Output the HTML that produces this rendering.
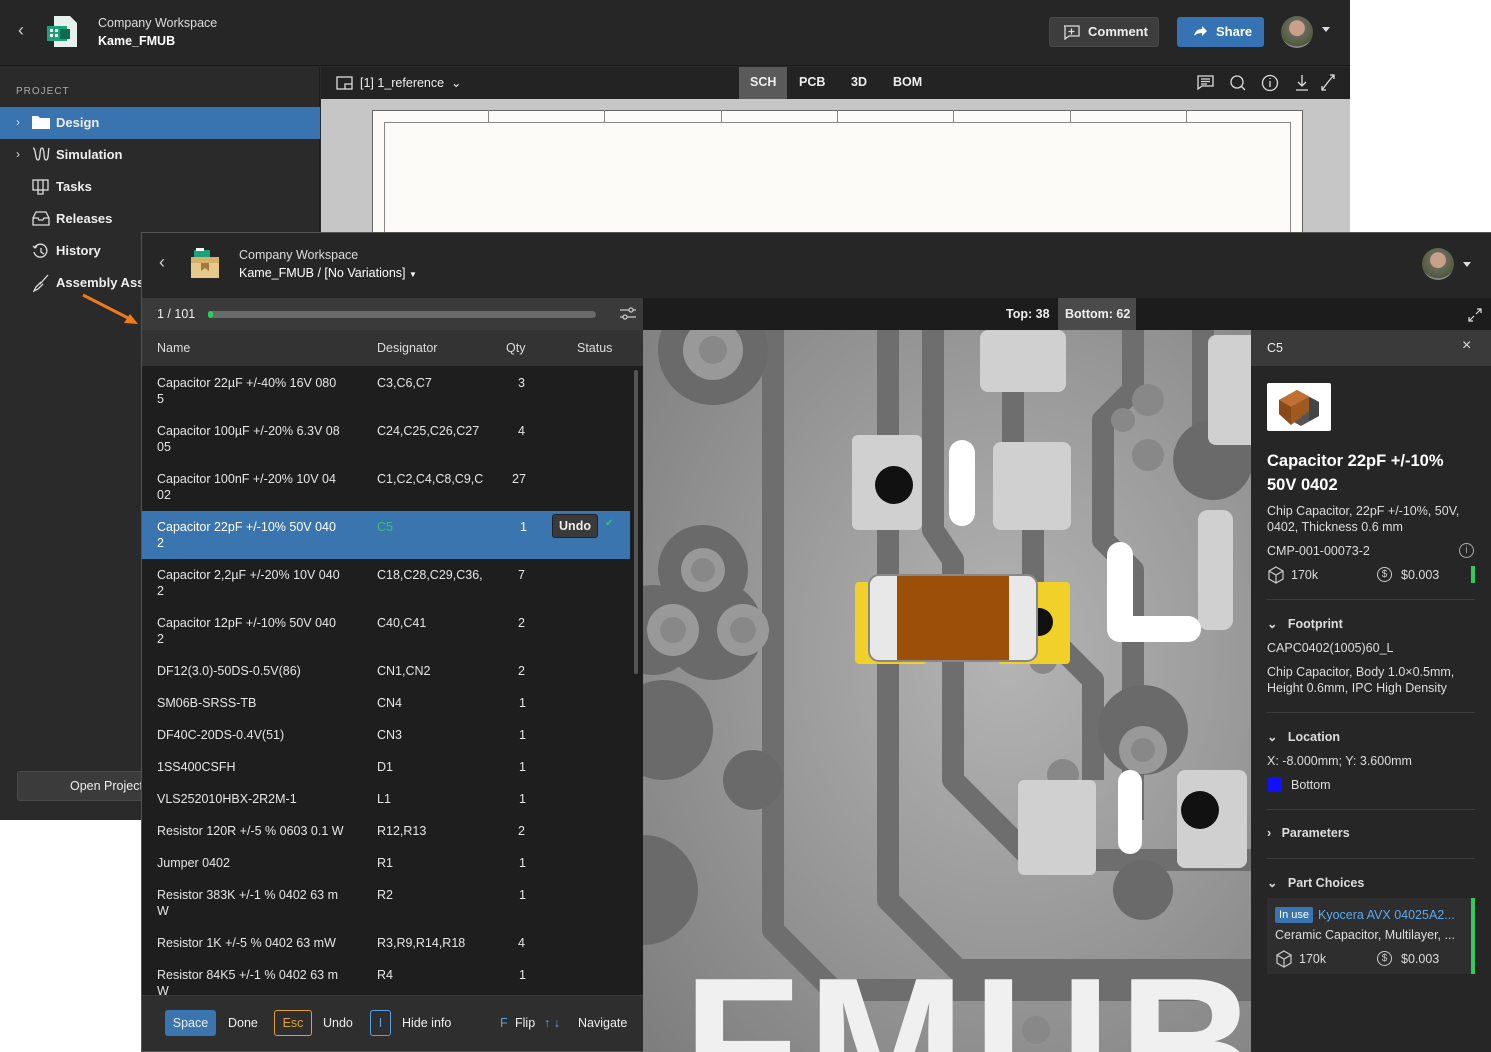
<!DOCTYPE html>
<html><head><meta charset="utf-8"><style>
*{box-sizing:border-box;margin:0;padding:0}
html,body{width:1491px;height:1052px;overflow:hidden}
body{background:#fff;font-family:"Liberation Sans",sans-serif;position:relative;color:#e8e8e8;font-size:13px}
.abs{position:absolute}
.side div.item{position:absolute;left:0;width:320px;height:32px;line-height:32px;font-size:13px;font-weight:bold;color:#eee;padding-left:56px}
.row{position:absolute;left:141px;width:490px;font-size:12.5px;color:#e6e6e6;line-height:16px}
.row span{position:absolute;white-space:nowrap}
.row span.d{width:106px;overflow:hidden}
.k{position:absolute;top:1010px;height:26px;line-height:26px;font-size:12.5px;color:#eee}
.ip{position:absolute;left:1267px;font-size:12.5px;color:#ddd;line-height:16px}
.sec{position:absolute;left:1267px;font-size:12.5px;font-weight:bold;color:#ddd}
.hr{position:absolute;left:1267px;width:208px;height:1px;background:#3c3c3c}
</style></head><body>

<div class="abs" style="left:0;top:0;width:1350px;height:820px;background:#2a2a2a"></div>
<div class="abs" style="left:0;top:0;width:1350px;height:66px;background:#262626;border-bottom:1px solid #1a1a1a"></div>
<div class="abs" style="left:18px;top:20px;font-size:18px;color:#ccc">‹</div>
<svg class="abs" style="left:46px;top:15px" width="36" height="34"><path d="M8 1h16l7 7v24H8z" fill="#e8f0ee"/><rect x="1" y="11" width="20" height="15" fill="#1aa37a"/><rect x="14" y="14" width="10" height="10" fill="#0d6b4f"/><rect x="4" y="14" width="3" height="3" fill="#fff"/><rect x="4" y="19" width="3" height="3" fill="#fff"/><rect x="9" y="14" width="3" height="3" fill="#fff"/><rect x="9" y="19" width="3" height="3" fill="#fff"/></svg>
<div class="abs" style="left:98px;top:16px;font-size:12.5px;color:#ddd">Company Workspace</div>
<div class="abs" style="left:98px;top:34px;font-size:12.5px;font-weight:bold;color:#fff">Kame_FMUB</div>
<div class="abs" style="left:1049px;top:17px;width:110px;height:30px;background:#3d3d3d;border-radius:3px;border:1px solid #4a4a4a;font-weight:bold;font-size:13px;line-height:28px;padding-left:38px;color:#eee">Comment</div>
<svg class="abs" style="left:1063px;top:25px" width="18" height="15"><path d="M1 1h15v10H6l-4 3V1z" fill="none" stroke="#ddd" stroke-width="1.3"/><path d="M8.5 3.5v6M5.5 6.5h6" stroke="#ddd" stroke-width="1.3"/></svg>
<div class="abs" style="left:1177px;top:17px;width:87px;height:30px;background:#3573b5;border-radius:3px;font-weight:bold;font-size:13px;line-height:30px;padding-left:39px;color:#fff">Share</div>
<svg class="abs" style="left:1193px;top:25px" width="14" height="12"><path d="M1 11c1-5 4-7 8-7V1l5 5-5 5V8c-3 0-6 1-8 3z" fill="#fff"/></svg>
<div class="abs" style="left:1281px;top:16px;width:32px;height:32px;border-radius:50%;background:radial-gradient(circle at 50% 38%,#c9a08a 0 30%,#6a6a5a 32%,#4d5a3c 70%,#8a8a8a 72%)"></div>
<div class="abs" style="left:1322px;top:27px;width:0;height:0;border-left:4px solid transparent;border-right:4px solid transparent;border-top:5px solid #ddd"></div>

<div class="abs" style="left:0;top:67px;width:320px;height:753px;background:#2a2a2a;border-right:1px solid #1c1c1c"></div>
<div class="abs" style="left:16px;top:86px;font-size:10px;letter-spacing:1px;color:#aaa">PROJECT</div>
<div class="side">
<div class="item" style="top:107px;background:#3a74b0">Design</div>
<div class="item" style="top:139px">Simulation</div>
<div class="item" style="top:171px">Tasks</div>
<div class="item" style="top:203px">Releases</div>
<div class="item" style="top:235px">History</div>
<div class="item" style="top:267px">Assembly Assistant</div>
</div>
<div class="abs" style="left:16px;top:115px;color:#ddd;font-size:12px">›</div>
<div class="abs" style="left:16px;top:147px;color:#ddd;font-size:12px">›</div>
<svg class="abs" style="left:31px;top:114px" width="20" height="16"><path d="M1 2h6l2 2h10v11H1z" fill="#fff"/></svg>
<svg class="abs" style="left:32px;top:146px" width="18" height="16" fill="none" stroke="#ddd" stroke-width="1.3"><path d="M1 2c3 0 2 12 5 12s1-12 4-12 1 12 4 12 2-10 3-12"/></svg>
<svg class="abs" style="left:32px;top:179px" width="18" height="16" fill="none" stroke="#ddd" stroke-width="1.3"><rect x="1" y="1" width="15" height="10"/><path d="M6 1v14h5V1"/></svg>
<svg class="abs" style="left:32px;top:211px" width="18" height="16" fill="none" stroke="#ddd" stroke-width="1.3"><path d="M1 7l3-6h10l3 6v7H1z M1 7h5l1 2h4l1-2h5"/></svg>
<svg class="abs" style="left:32px;top:243px" width="18" height="16" fill="none" stroke="#ddd" stroke-width="1.3"><path d="M3 4a6.5 6.5 0 1 1-1 5"/><path d="M1 3l2 2 2-2M9 5v4l3 2"/></svg>
<svg class="abs" style="left:32px;top:274px" width="18" height="18" fill="none" stroke="#ddd" stroke-width="1.3"><path d="M16 1L8 10M9 8l-5 5-2 4 4-2 5-5"/></svg>
<div class="abs" style="left:17px;top:771px;width:130px;height:30px;background:#3b3b3b;border-radius:3px;border:1px solid #4a4a4a;font-size:12.5px;line-height:28px;padding-left:52px;color:#eee">Open Project</div>

<div class="abs" style="left:321px;top:67px;width:1029px;height:32px;background:#232323"></div>
<svg class="abs" style="left:336px;top:76px" width="17" height="14" fill="none" stroke="#ddd" stroke-width="1.3"><rect x="1" y="1" width="15" height="12"/><path d="M9 13V8h7"/></svg>
<div class="abs" style="left:360px;top:75px;font-size:12.5px;color:#eee">[1] 1_reference &nbsp;⌄</div>
<div class="abs" style="left:739px;top:67px;width:48px;height:32px;background:#5a5a5a"></div>
<div class="abs" style="left:750px;top:75px;font-size:12.5px;font-weight:bold;color:#eee">SCH</div>
<div class="abs" style="left:799px;top:75px;font-size:12.5px;font-weight:bold;color:#eee">PCB</div>
<div class="abs" style="left:851px;top:75px;font-size:12.5px;font-weight:bold;color:#eee">3D</div>
<div class="abs" style="left:893px;top:75px;font-size:12.5px;font-weight:bold;color:#eee">BOM</div>
<svg class="abs" style="left:1196px;top:73px" width="150" height="20" fill="none" stroke="#ddd" stroke-width="1.3">
<path d="M2 3h15v10H6l-4 3z M5 6h9M5 8.5h9M5 11h6"/>
<circle cx="41" cy="9" r="6"/><path d="M45 13l4 4"/>
<circle cx="74" cy="10" r="7.5"/><path d="M74 8v6M74 5v1"/>
<path d="M106 2v11M102 9l4 4 4-4M100 17h12"/>
<path d="M132 9l-6 8M126 13v4h4M132 9l6-7M134 2h4v4"/>
</svg>
<div class="abs" style="left:321px;top:99px;width:1029px;height:721px;background:#c6c6c6"></div>
<div class="abs" style="left:372px;top:110px;width:931px;height:710px;background:#fdfbf8;border:1px solid #666"></div>
<div class="abs" style="left:384px;top:122px;width:907px;height:698px;border:1px solid #888;border-bottom:none"></div>
<div class="abs" style="left:488px;top:110px;width:1px;height:12px;background:#888;box-shadow:116px 0 #888,233px 0 #888,349px 0 #888,465px 0 #888,582px 0 #888,698px 0 #888"></div>

<svg class="abs" style="left:80px;top:292px" width="66" height="40"><path d="M3 3L52 28" stroke="#f07a1a" stroke-width="3"/><path d="M58 32l-14-1 6-9z" fill="#f07a1a"/></svg>

<div class="abs" style="left:141px;top:232px;width:1350px;height:820px;background:#1e1e1e;border:1px solid #555"></div>
<div class="abs" style="left:142px;top:233px;width:1349px;height:65px;background:#262626"></div>
<div class="abs" style="left:159px;top:252px;font-size:18px;color:#ccc">‹</div>
<svg class="abs" style="left:190px;top:247px" width="30" height="32"><rect x="4" y="3" width="16" height="8" fill="#1aa37a"/><rect x="6" y="1" width="8" height="3" fill="#fff"/><rect x="1" y="10" width="28" height="21" fill="#e6c98a"/><rect x="1" y="10" width="28" height="6" fill="#d4b06a"/><path d="M11 16h8v8l-4-3-4 3z" fill="#a07a3a"/></svg>
<div class="abs" style="left:239px;top:248px;font-size:12.5px;color:#ddd">Company Workspace</div>
<div class="abs" style="left:239px;top:266px;font-size:12.5px;color:#fff">Kame_FMUB / [No Variations] <span style="font-size:8px">▼</span></div>
<div class="abs" style="left:1422px;top:248px;width:32px;height:32px;border-radius:50%;background:radial-gradient(circle at 50% 38%,#c9a08a 0 30%,#6a6a5a 32%,#4d5a3c 70%,#8a8a8a 72%)"></div>
<div class="abs" style="left:1463px;top:262px;width:0;height:0;border-left:4px solid transparent;border-right:4px solid transparent;border-top:5px solid #ddd"></div>

<div class="abs" style="left:142px;top:298px;width:501px;height:32px;background:#3a3a3a"></div>
<div class="abs" style="left:157px;top:307px;font-size:12.5px;color:#eee">1 / 101</div>
<div class="abs" style="left:208px;top:311px;width:388px;height:7px;border-radius:4px;background:#6a6a6a"></div>
<div class="abs" style="left:208px;top:311px;width:5px;height:7px;border-radius:4px;background:#2ecc5a"></div>
<svg class="abs" style="left:619px;top:306px" width="18" height="16" fill="none" stroke="#ccc" stroke-width="1.2"><path d="M1 4h16M1 11h16"/><circle cx="12" cy="4" r="2" fill="#3a3a3a"/><circle cx="6" cy="11" r="2" fill="#3a3a3a"/></svg>
<div class="abs" style="left:643px;top:298px;width:848px;height:32px;background:#1c1c1c"></div>
<div class="abs" style="left:1006px;top:307px;font-size:12.5px;font-weight:bold;color:#eee">Top: 38</div>
<div class="abs" style="left:1058px;top:298px;width:78px;height:32px;background:#4a4a4a"></div>
<div class="abs" style="left:1065px;top:307px;font-size:12.5px;font-weight:bold;color:#eee">Bottom: 62</div>
<svg class="abs" style="left:1467px;top:307px" width="16" height="16" fill="none" stroke="#ddd" stroke-width="1.2"><path d="M2 14l5-5M2 10v4h4M14 2l-5 5M10 2h4v4"/></svg>

<div class="abs" style="left:142px;top:330px;width:501px;height:36px;background:#333"></div>
<div class="abs" style="left:157px;top:341px;font-size:12.5px;color:#ddd">Name</div>
<div class="abs" style="left:377px;top:341px;font-size:12.5px;color:#ddd">Designator</div>
<div class="abs" style="left:506px;top:341px;font-size:12.5px;color:#ddd">Qty</div>
<div class="abs" style="left:577px;top:341px;font-size:12.5px;color:#ddd">Status</div>
<div class="abs" style="left:142px;top:366px;width:501px;height:629px;background:#1e1e1e"></div>
<div class="abs" style="left:634px;top:370px;width:4px;height:304px;border-radius:2px;background:#555"></div>
<div class="abs" style="left:142px;top:511px;width:488px;height:48px;background:#3a75b0"></div>
<div class="row" style="top:375px"><span style="left:16px">Capacitor 22µF +/-40% 16V 080<br>5</span><span class="d" style="left:236px">C3,C6,C7</span><span style="left:377px">3</span></div>
<div class="row" style="top:423px"><span style="left:16px">Capacitor 100µF +/-20% 6.3V 08<br>05</span><span class="d" style="left:236px">C24,C25,C26,C27</span><span style="left:377px">4</span></div>
<div class="row" style="top:471px"><span style="left:16px">Capacitor 100nF +/-20% 10V 04<br>02</span><span class="d" style="left:236px">C1,C2,C4,C8,C9,C10</span><span style="left:371px">27</span></div>
<div class="row" style="top:519px;color:#fff"><span style="left:16px">Capacitor 22pF +/-10% 50V 040<br>2</span><span style="left:236px;color:#34c07a">C5</span><span style="left:379px">1</span></div>
<div class="abs" style="left:552px;top:514px;width:46px;height:24px;background:#3a3a3a;border:1px solid #222;border-radius:3px;font-size:12.5px;font-weight:bold;line-height:22px;text-align:center;color:#eee">Undo</div>
<div class="abs" style="left:605px;top:518px;font-size:10px;color:#34c07a">✔</div>
<div class="row" style="top:567px"><span style="left:16px">Capacitor 2,2µF +/-20% 10V 040<br>2</span><span class="d" style="left:236px">C18,C28,C29,C36,C37</span><span style="left:377px">7</span></div>
<div class="row" style="top:615px"><span style="left:16px">Capacitor 12pF +/-10% 50V 040<br>2</span><span class="d" style="left:236px">C40,C41</span><span style="left:377px">2</span></div>
<div class="row" style="top:663px"><span style="left:16px">DF12(3.0)-50DS-0.5V(86)</span><span style="left:236px">CN1,CN2</span><span style="left:377px">2</span></div>
<div class="row" style="top:695px"><span style="left:16px">SM06B-SRSS-TB</span><span style="left:236px">CN4</span><span style="left:378px">1</span></div>
<div class="row" style="top:727px"><span style="left:16px">DF40C-20DS-0.4V(51)</span><span style="left:236px">CN3</span><span style="left:378px">1</span></div>
<div class="row" style="top:759px"><span style="left:16px">1SS400CSFH</span><span style="left:236px">D1</span><span style="left:378px">1</span></div>
<div class="row" style="top:791px"><span style="left:16px">VLS252010HBX-2R2M-1</span><span style="left:236px">L1</span><span style="left:378px">1</span></div>
<div class="row" style="top:823px"><span style="left:16px">Resistor 120R +/-5 % 0603 0.1 W</span><span style="left:236px">R12,R13</span><span style="left:377px">2</span></div>
<div class="row" style="top:855px"><span style="left:16px">Jumper 0402</span><span style="left:236px">R1</span><span style="left:378px">1</span></div>
<div class="row" style="top:887px"><span style="left:16px">Resistor 383K +/-1 % 0402 63 m<br>W</span><span style="left:236px">R2</span><span style="left:378px">1</span></div>
<div class="row" style="top:935px"><span style="left:16px">Resistor 1K +/-5 % 0402 63 mW</span><span style="left:236px">R3,R9,R14,R18</span><span style="left:377px">4</span></div>
<div class="row" style="top:967px;height:28px;overflow:hidden"><span style="left:16px">Resistor 84K5 +/-1 % 0402 63 m<br>W</span><span style="left:236px">R4</span><span style="left:378px">1</span></div>

<div class="abs" style="left:142px;top:995px;width:501px;height:56px;background:#2e2e2e;border-top:1px solid #3a3a3a"></div>
<div class="k" style="left:165px;width:51px;background:#3a75b0;border-radius:3px;text-align:center">Space</div>
<div class="k" style="left:228px">Done</div>
<div class="k" style="left:274px;width:38px;border:1px solid #e0a030;border-radius:3px;text-align:center;color:#e0a030;line-height:24px">Esc</div>
<div class="k" style="left:323px">Undo</div>
<div class="k" style="left:370px;width:21px;border:1px solid #5aa0e0;border-radius:3px;text-align:center;color:#5aa0e0;line-height:24px">I</div>
<div class="k" style="left:402px">Hide info</div>
<div class="k" style="left:500px;color:#5aa0e0">F</div>
<div class="k" style="left:515px">Flip</div>
<div class="k" style="left:544px;color:#5aa0e0">↑ ↓</div>
<div class="k" style="left:578px">Navigate</div>

<div class="abs" style="left:643px;top:330px;width:608px;height:722px;overflow:hidden">
<svg width="608" height="722" viewBox="0 0 608 722" style="display:block">
<defs><radialGradient id="g" cx="0.6" cy="0.45" r="0.8"><stop offset="0" stop-color="#b4b4b4"/><stop offset="1" stop-color="#7e7e7e"/></radialGradient></defs>
<rect width="608" height="722" fill="url(#g)"/>
<g fill="none" stroke="#6e6e6e" stroke-width="22" stroke-linejoin="round">
<path d="M130 0v600l60 60h420"/>
<path d="M245 0v570l70 70h293"/>
<path d="M290 0v200l20 30v220l80 80h218"/>
<path d="M370 0v130l20 20v140l60 60v100"/>
<path d="M490 0v60l-30 30v120l30 30v250"/>
<path d="M560 0v100"/>
</g>
<g fill="#6a6a6a"><circle cx="70" cy="20" r="55"/><circle cx="70" cy="300" r="50"/><circle cx="10" cy="300" r="45"/><circle cx="60" cy="240" r="45"/><circle cx="20" cy="400" r="50"/><circle cx="0" cy="560" r="55"/><circle cx="570" cy="130" r="40"/><circle cx="500" cy="400" r="45"/><circle cx="110" cy="450" r="30"/><circle cx="500" cy="560" r="30"/></g>
<g fill="#999"><circle cx="70" cy="20" r="30"/><circle cx="30" cy="300" r="26"/><circle cx="100" cy="300" r="26"/><circle cx="60" cy="240" r="22"/><circle cx="500" cy="420" r="24"/></g>
<g fill="#888"><circle cx="70" cy="20" r="14"/><circle cx="30" cy="300" r="13"/><circle cx="100" cy="300" r="13"/><circle cx="60" cy="240" r="12"/><circle cx="500" cy="420" r="12"/><circle cx="505" cy="70" r="16"/><circle cx="505" cy="125" r="16"/><circle cx="480" cy="90" r="12"/><circle cx="400" cy="330" r="14"/><circle cx="420" cy="445" r="16"/><circle cx="393" cy="700" r="14"/></g>
<g fill="#d0d0d0"><rect x="337" y="0" width="86" height="62" rx="8"/><rect x="565" y="5" width="50" height="110" rx="8"/><rect x="209" y="105" width="70" height="95" rx="6"/><rect x="350" y="112" width="78" height="88" rx="8"/><rect x="555" y="180" width="35" height="120" rx="10"/><rect x="375" y="450" width="78" height="95" rx="6"/><rect x="534" y="440" width="70" height="98" rx="8"/></g>
<g fill="#111"><ellipse cx="251" cy="155" rx="19" ry="19"/><ellipse cx="557" cy="480" rx="19" ry="19"/><circle cx="395" cy="292" r="12"/></g>
<g fill="#fff"><rect x="306" y="110" width="26" height="86" rx="13"/><rect x="464" y="212" width="26" height="100" rx="13"/><rect x="464" y="286" width="94" height="26" rx="13"/><rect x="475" y="440" width="24" height="84" rx="12"/></g>
<rect x="212" y="252" width="72" height="82" rx="4" fill="#f2d02a"/><rect x="355" y="252" width="72" height="82" rx="4" fill="#f2d02a"/>
<circle cx="396" cy="292" r="14" fill="#111"/>
<rect x="226" y="245" width="168" height="86" rx="10" fill="#e8e8e8" stroke="#888" stroke-width="2"/>
<rect x="254" y="246" width="112" height="84" fill="#9c4f08"/>
<text x="40" y="780" font-family="Liberation Sans" font-weight="bold" font-size="190" fill="#f0f0f0" letter-spacing="8">FMUB</text>
</svg>
</div>

<div class="abs" style="left:1251px;top:330px;width:240px;height:36px;background:#3a3a3a"></div>
<div class="abs" style="left:1267px;top:341px;font-size:12.5px;color:#eee">C5</div>
<div class="abs" style="left:1462px;top:337px;font-size:16px;color:#ddd">×</div>
<div class="abs" style="left:1251px;top:366px;width:240px;height:686px;background:#262626"></div>
<div class="abs" style="left:1267px;top:383px;width:64px;height:48px;background:#fff;border-radius:2px"></div>
<svg class="abs" style="left:1275px;top:386px" width="48" height="42"><path d="M4 14l18-10 22 12v14L26 40 4 28z" fill="#555"/><path d="M4 14l18-10 12 7-18 10z" fill="#c07030"/><path d="M4 14l12 7v18L4 28z" fill="#8a4a18"/><path d="M16 21l18-10v14L16 39z" fill="#a05a20"/><path d="M34 11l10 5v14l-10 5z" fill="#444"/></svg>
<div class="abs" style="left:1267px;top:449px;font-size:16.5px;font-weight:bold;color:#fff;line-height:24px;width:200px">Capacitor 22pF +/-10%<br>50V 0402</div>
<div class="ip" style="top:503px;width:210px">Chip Capacitor, 22pF +/-10%, 50V, 0402, Thickness 0.6 mm</div>
<div class="ip" style="top:543px">CMP-001-00073-2</div>
<div class="abs" style="left:1459px;top:543px;width:15px;height:15px;border:1px solid #aaa;border-radius:50%;font-size:10px;text-align:center;line-height:13px;color:#aaa">i</div>
<svg class="abs" style="left:1267px;top:566px" width="18" height="18" fill="none" stroke="#ccc" stroke-width="1.2"><path d="M9 1l7 4v8l-7 4-7-4V5z M2 5l7 4 7-4M9 9v8"/></svg>
<div class="ip" style="top:567px;left:1291px">170k</div>
<div class="abs" style="left:1377px;top:567px;width:15px;height:15px;border:1px solid #ccc;border-radius:50%;font-size:10px;text-align:center;line-height:13px;color:#ccc">$</div>
<div class="ip" style="top:567px;left:1401px">$0.003</div>
<div class="abs" style="left:1471px;top:566px;width:4px;height:17px;background:#2ecc5a"></div>
<div class="hr" style="top:599px"></div>
<div class="sec" style="top:616px">⌄&nbsp;&nbsp; Footprint</div>
<div class="ip" style="top:640px">CAPC0402(1005)60_L</div>
<div class="ip" style="top:664px;width:210px">Chip Capacitor, Body 1.0×0.5mm, Height 0.6mm, IPC High Density</div>
<div class="hr" style="top:712px"></div>
<div class="sec" style="top:729px">⌄&nbsp;&nbsp; Location</div>
<div class="ip" style="top:753px">X: -8.000mm; Y: 3.600mm</div>
<div class="abs" style="left:1268px;top:777px;width:14px;height:15px;background:#1010ff"></div>
<div class="ip" style="top:777px;left:1291px">Bottom</div>
<div class="hr" style="top:809px"></div>
<div class="sec" style="top:826px">›&nbsp;&nbsp; Parameters</div>
<div class="hr" style="top:858px"></div>
<div class="sec" style="top:875px">⌄&nbsp;&nbsp; Part Choices</div>
<div class="abs" style="left:1267px;top:898px;width:208px;height:76px;background:#2e2e2e;border-right:4px solid #2ecc5a"></div>
<div class="abs" style="left:1275px;top:907px;width:38px;height:16px;background:#3a75b0;border-radius:2px;font-size:11px;line-height:16px;text-align:center;color:#fff">In use</div>
<div class="ip" style="top:907px;left:1318px;color:#5aaaf0">Kyocera AVX 04025A2...</div>
<div class="ip" style="top:927px;left:1275px">Ceramic Capacitor, Multilayer, ...</div>
<svg class="abs" style="left:1275px;top:950px" width="18" height="18" fill="none" stroke="#ccc" stroke-width="1.2"><path d="M9 1l7 4v8l-7 4-7-4V5z M2 5l7 4 7-4M9 9v8"/></svg>
<div class="ip" style="top:951px;left:1299px">170k</div>
<div class="abs" style="left:1377px;top:951px;width:15px;height:15px;border:1px solid #ccc;border-radius:50%;font-size:10px;text-align:center;line-height:13px;color:#ccc">$</div>
<div class="ip" style="top:951px;left:1401px">$0.003</div>
</body></html>
